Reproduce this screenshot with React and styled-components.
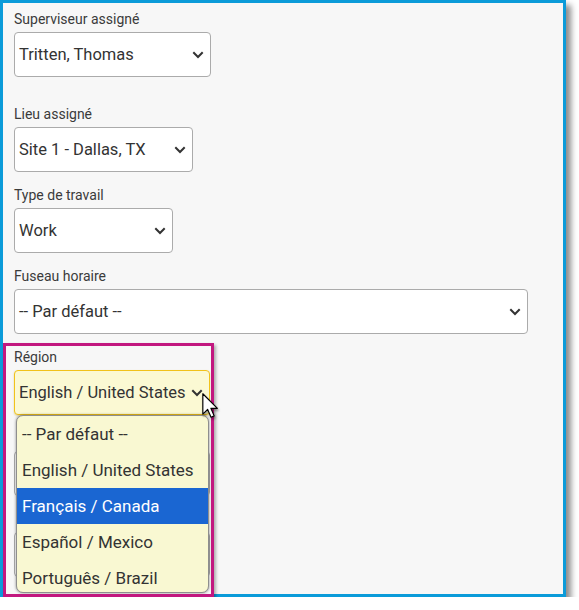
import React from 'react';
import styled, { createGlobalStyle } from 'styled-components';

const Global = createGlobalStyle`
  html, body { margin: 0; padding: 0; background: #ffffff; }
  body { font-family: Roboto, "Noto Sans", "Liberation Sans", sans-serif; }
`;

const Frame = styled.div`
  box-sizing: border-box;
  position: relative;
  width: 566px;
  height: 597px;
  border: 3px solid #0b9bd9;
  background: #f7f7f7;
  box-shadow: 5px 5px 6px rgba(0, 0, 0, 0.45);
  padding: 7px 0 0 11px;
  display: flex;
  flex-direction: column;
`;

const Field = styled.div`
  position: relative;
  display: flex;
  flex-direction: column;
  align-items: flex-start;
  gap: 4px;
  margin-bottom: ${(p) => (p.$after ?? 14)}px;
  z-index: ${(p) => (p.$raised ? 2 : 1)};
`;

const Label = styled.label`
  font-size: 14px;
  line-height: 18px;
  min-height: 18px;
  color: #3b3b3b;
`;

const SelectBox = styled.div`
  box-sizing: border-box;
  width: ${(p) => p.$w}px;
  height: 45px;
  border: 1px solid ${(p) => (p.$focused ? '#f1c21b' : '#ababab')};
  border-radius: 4px;
  background: ${(p) => (p.$focused ? '#fbf9d3' : '#ffffff')};
  box-shadow: ${(p) => (p.$focused ? '0 1px 2px rgba(180,150,0,0.35)' : 'none')};
  display: flex;
  align-items: center;
  justify-content: space-between;
  padding: 0 6px 0 4px;
  font-size: 16.5px;
  color: #333333;
  white-space: nowrap;
`;

const Chevron = () => (
  <svg width="12" height="8" viewBox="0 0 12 8">
    <path d="M1.3 1.3 L6 6 L10.7 1.3" fill="none" stroke="#333" strokeWidth="2" />
  </svg>
);

const Highlight = styled.div`
  position: absolute;
  left: -11px;
  top: -5px;
  width: 211px;
  height: 254px;
  box-sizing: border-box;
  border: 3px solid #c2187f;
  box-shadow: 2px 2px 3px rgba(0, 0, 0, 0.3);
  pointer-events: none;
  z-index: 4;
`;

const Dropdown = styled.ul`
  position: absolute;
  left: 2px;
  top: 67px;
  width: 193px;
  height: 178px;
  box-sizing: border-box;
  margin: 0;
  padding: 0;
  list-style: none;
  background: #f9f8d2;
  border: 1px solid #8e8e8e;
  border-radius: 7px;
  box-shadow: 0 0 3px rgba(0, 0, 0, 0.45);
  overflow: hidden;
  z-index: 3;
`;

const Option = styled.li`
  height: 36px;
  display: flex;
  align-items: center;
  padding-left: 5px;
  font-size: 17px;
  color: ${(p) => (p.$active ? '#ffffff' : '#333333')};
  background: ${(p) => (p.$active ? '#1a66d2' : 'transparent')};
  white-space: nowrap;
`;

const Cursor = styled.svg`
  position: absolute;
  left: 188px;
  top: 45px;
  z-index: 5;
  filter: drop-shadow(1px 2px 1px rgba(0, 0, 0, 0.35));
`;

const fields = [
  { label: 'Superviseur assigné', value: 'Tritten, Thomas', w: 197, after: 28 },
  { label: 'Lieu assigné', value: 'Site 1 - Dallas, TX', w: 179 },
  { label: 'Type de travail', value: 'Work', w: 159 },
  { label: 'Fuseau horaire', value: '-- Par défaut --', w: 514 },
];

const options = [
  '-- Par défaut --',
  'English / United States',
  'Français / Canada',
  'Español / Mexico',
  'Português / Brazil',
];

export default function App() {
  return (
    <>
      <Global />
      <Frame>
        {fields.map((f) => (
          <Field key={f.label} $after={f.after}>
            <Label>{f.label}</Label>
            <SelectBox $w={f.w}>
              <span>{f.value}</span>
              <Chevron />
            </SelectBox>
          </Field>
        ))}
        <Field $raised>
          <Highlight />
          <Label>Région</Label>
          <SelectBox $w={196} $focused>
            <span>English / United States</span>
            <Chevron />
          </SelectBox>
          <Dropdown>
            {options.map((o) => (
              <Option key={o} $active={o === 'Français / Canada'}>
                {o}
              </Option>
            ))}
          </Dropdown>
          <Cursor width="17" height="26" viewBox="0 0 13 20">
            <path
              d="M0.6 0.6 L0.6 16.2 L4.3 12.6 L6.9 18.6 L9.3 17.6 L6.8 11.8 L11.8 11.8 Z"
              fill="#ffffff"
              stroke="#000000"
              strokeWidth="0.9"
              strokeLinejoin="round"
            />
          </Cursor>
        </Field>
        <Field>
          <Label />
          <SelectBox $w={196} />
        </Field>
        <Field>
          <Label />
          <SelectBox $w={196} />
        </Field>
      </Frame>
    </>
  );
}
